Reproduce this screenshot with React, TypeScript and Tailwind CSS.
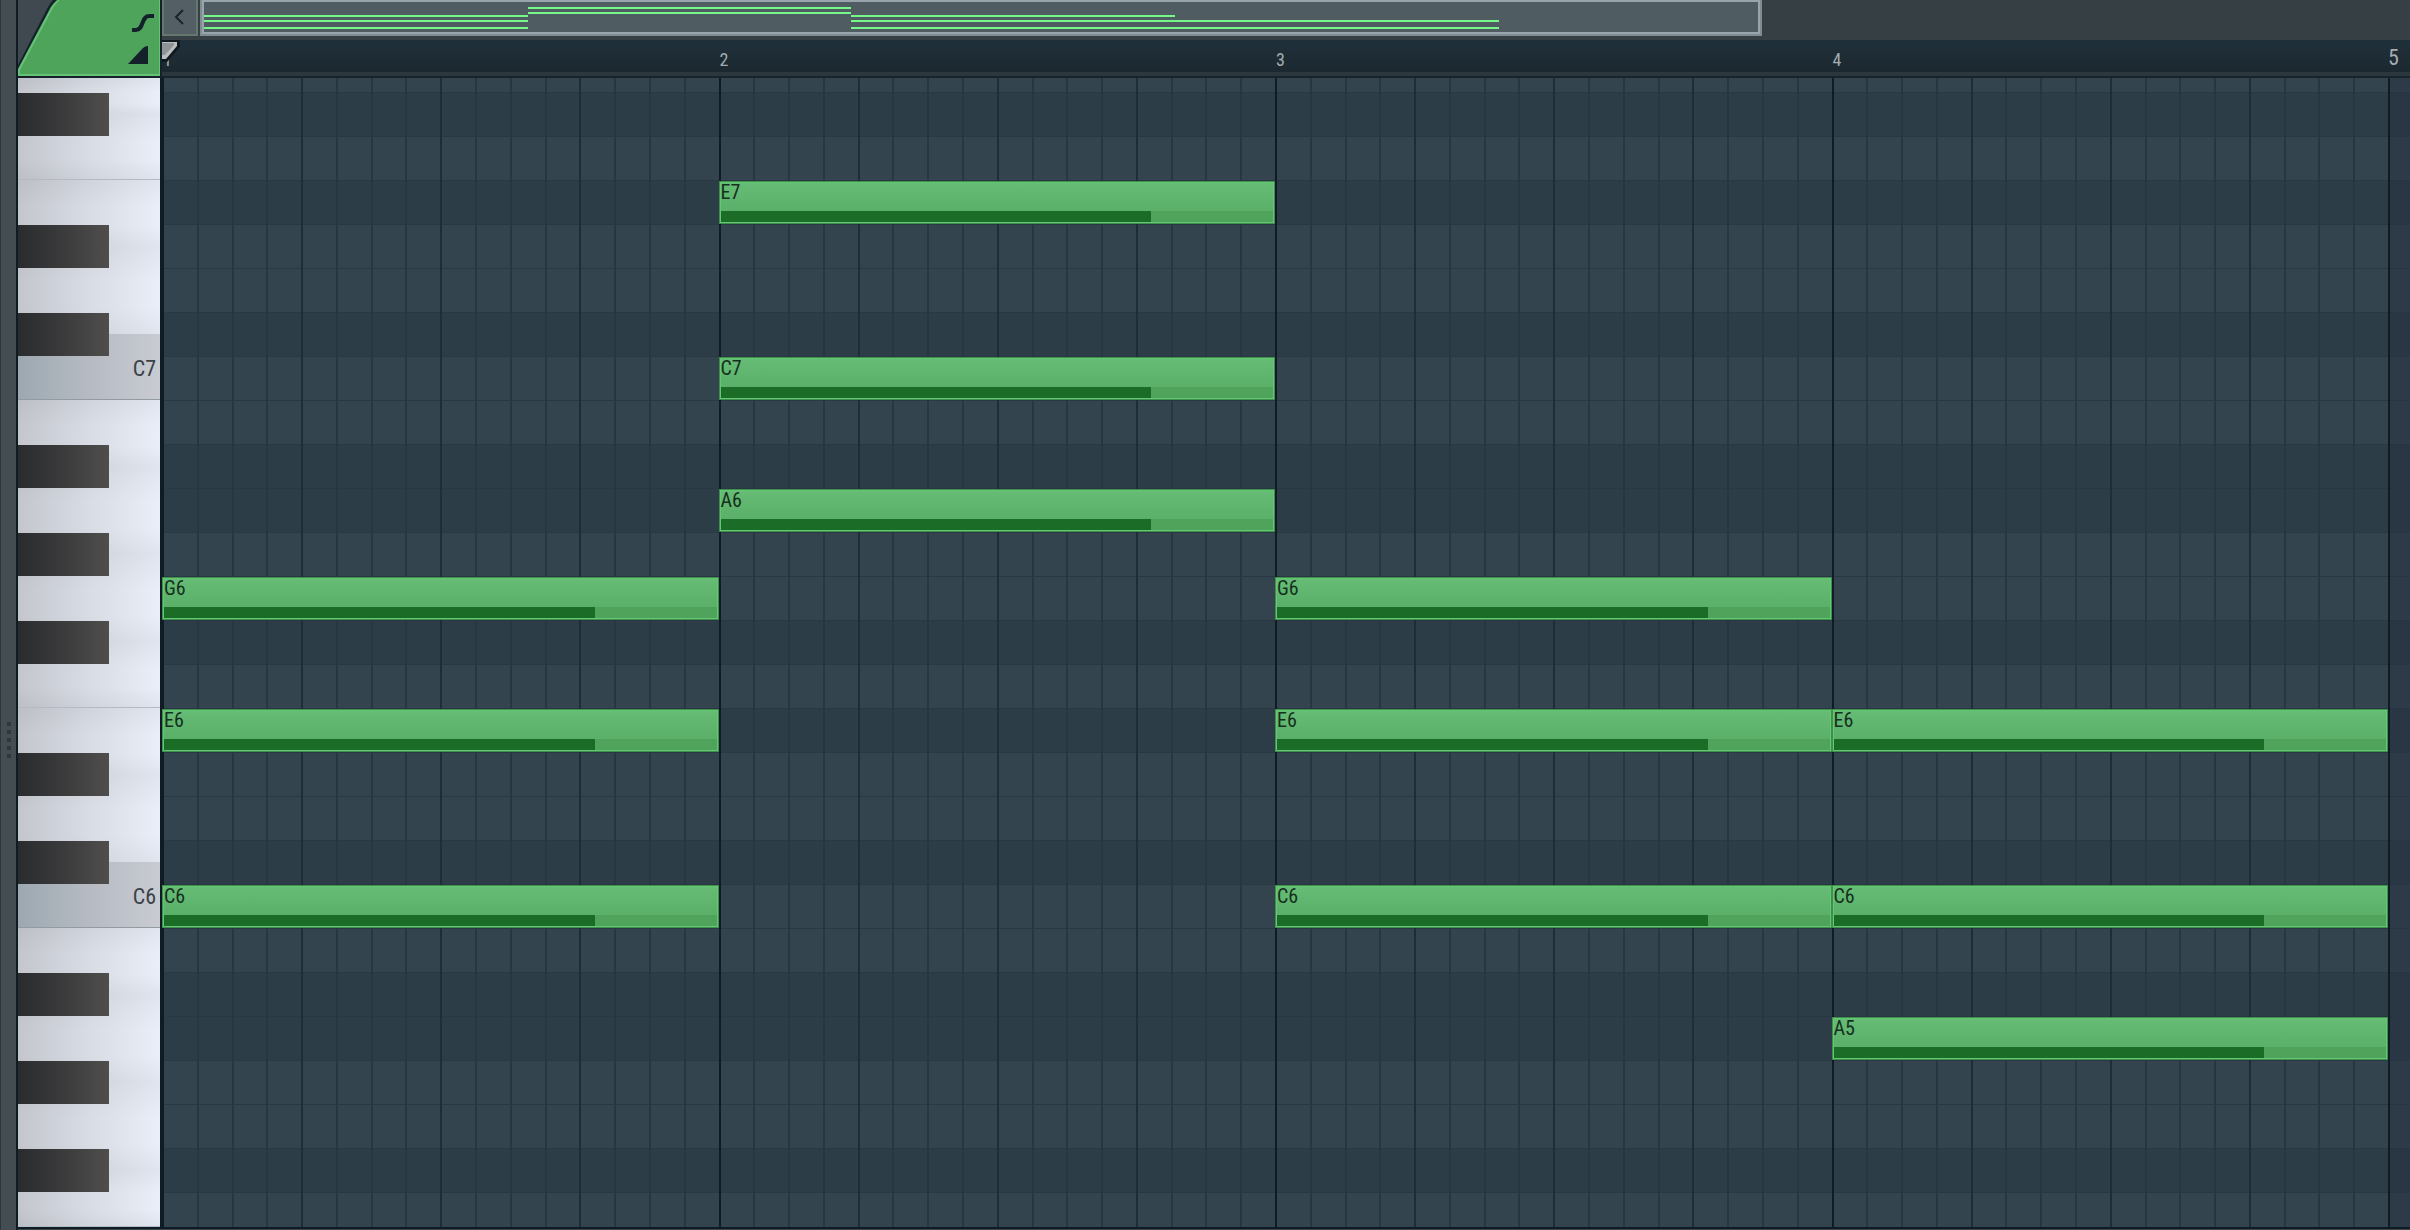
import React from 'react';

const BARS = 4;

// [pitch, dark row] from the top of the view down
const rows: [string, boolean][] = [
  ['G7', false],
  ['F#7', true],
  ['F7', false],
  ['E7', true],
  ['D#7', false],
  ['D7', false],
  ['C#7', true],
  ['C7', false],
  ['B6', false],
  ['A#6', true],
  ['A6', true],
  ['G#6', false],
  ['G6', false],
  ['F#6', true],
  ['F6', false],
  ['E6', true],
  ['D#6', false],
  ['D6', false],
  ['C#6', true],
  ['C6', false],
  ['B5', false],
  ['A#5', true],
  ['A5', true],
  ['G#5', false],
  ['G5', false],
  ['F#5', true],
  ['F5', false],
];

const notes = [
  { pitch: 'G6', bar: 1 },
  { pitch: 'E6', bar: 1 },
  { pitch: 'C6', bar: 1 },
  { pitch: 'E7', bar: 2 },
  { pitch: 'C7', bar: 2 },
  { pitch: 'A6', bar: 2 },
  { pitch: 'G6', bar: 3 },
  { pitch: 'E6', bar: 3 },
  { pitch: 'C6', bar: 3 },
  { pitch: 'E6', bar: 4 },
  { pitch: 'C6', bar: 4 },
  { pitch: 'A5', bar: 4 },
];

const whiteKeys = [
  { name: 'G7', size: 'h-9', black: '' },
  { name: 'F7', size: 'h-[66px]', black: 'F#7' },
  { name: 'E7', size: 'h-[66px]', black: '' },
  { name: 'D7', size: 'h-[88px]', black: 'D#7' },
  { name: 'C7', size: 'h-[66px]', black: 'C#7' },
  { name: 'B6', size: 'h-[66px]', black: '' },
  { name: 'A6', size: 'h-[88px]', black: 'A#6' },
  { name: 'G6', size: 'h-[88px]', black: 'G#6' },
  { name: 'F6', size: 'h-[66px]', black: 'F#6' },
  { name: 'E6', size: 'h-[66px]', black: '' },
  { name: 'D6', size: 'h-[88px]', black: 'D#6' },
  { name: 'C6', size: 'h-[66px]', black: 'C#6' },
  { name: 'B5', size: 'h-[66px]', black: '' },
  { name: 'A5', size: 'h-[88px]', black: 'A#5' },
  { name: 'G5', size: 'h-[88px]', black: 'G#5' },
  { name: 'F5', size: 'h-[57px]', black: 'F#5' },
];

// vertical offsets of the lines in each bar of the overview
const overview = [
  [13, 18, 25],
  [5, 10],
  [13, 18, 25],
  [18, 25],
];

const barStart = ['', 'col-start-1', 'col-start-2', 'col-start-3', 'col-start-4'];

const whiteFace =
  'bg-[linear-gradient(to_bottom,#0000000a,transparent_40%,transparent_70%,#0000000a),linear-gradient(to_right,#c3c6cd,#d8dce4_50%,#e9eef8)]';
const shadedFace = 'bg-linear-to-r from-[#9ca8b0] via-[#b4b9c1] via-45% to-[#c8cbd2]';

const keyStyle = (name: string) => {
  if (name.startsWith('C')) return `border-b border-[#929ba2] ${shadedFace}`;
  if (name.startsWith('F')) return `border-b border-[#b4b9c2] ${whiteFace}`;
  return whiteFace;
};

const ToolCorner = () => (
  <div className="relative h-[78px] shrink-0">
    <svg className="absolute inset-0" width="144" height="78" viewBox="0 0 144 78" aria-hidden="true">
      <rect width="144" height="78" fill="#3f494f" />
      <path d="M0 78V65L30 7Q34 0 38 -3H144V78Z" fill="#15222a" />
      <path d="M0 76V69L33 7Q37 1 43 -3H142V76Z" fill="#66c277" />
      <path d="M2 74V70L35 8Q39 2 45 -3H141V74Z" fill="#4fa45c" />
    </svg>
    <div className="relative flex h-full flex-col items-end justify-end gap-3.5 pr-3 pb-3">
      <button aria-label="Slide" className="mr-[-6px]">
        <svg width="24" height="22" viewBox="0 0 24 22">
          <path d="M2 20H6C14 20 11 6 19 6H24" fill="none" stroke="#14202a" strokeWidth="4" />
        </svg>
      </button>
      <button aria-label="Ramp">
        <svg width="20" height="20" viewBox="0 0 20 20">
          <path d="M0 18L15 2Q17 0 20 0V18Z" fill="#14202a" />
        </svg>
      </button>
    </div>
  </div>
);

const Keyboard = () => (
  <div className="flex flex-col overflow-hidden border-b-2 border-[#101c24]">
    {whiteKeys.map((key) => (
      <div key={key.name} className={`relative ${key.size}`}>
        <button
          aria-label={key.name}
          className={`flex h-full w-full items-end justify-end pr-1 pb-[18px] text-[22px] leading-6 text-[#3a4247] ${keyStyle(key.name)}`}
        >
          {key.name.startsWith('C') && key.name}
        </button>
        {key.black && (
          <button
            aria-label={key.black}
            className="absolute top-[-21px] left-0 h-[43px] w-[91px] bg-linear-to-r from-[#292b2d] via-[#3b3b3c] to-[#504e4d]"
          />
        )}
      </div>
    ))}
  </div>
);

const Overview = () => (
  <div className="flex h-9 gap-[2px]">
    <button
      aria-label="Scroll left"
      className="flex w-9 items-center justify-center border-2 border-t-0 border-[#64776f] bg-[#535f65]"
    >
      <svg width="14" height="18" viewBox="0 0 14 18">
        <path d="M10 2L3 9L10 16" fill="none" stroke="#18242b" strokeWidth="2" />
      </svg>
    </button>
    <div className="flex-1">
      <div className="h-9 w-[70.7%] border-2 border-t-0 border-[#828b8f]">
        <div className="h-[34px] border-2 border-[#98a5ac] bg-[#4f5c62]">
          <div className="grid h-full w-[83.3%] grid-cols-4">
            {overview.map((lines, i) => (
              <div key={i} className="relative">
                {lines.map((top) => (
                  <div key={top} className="absolute inset-x-0 h-[2px] bg-[#76f78a]" style={{ top }} />
                ))}
              </div>
            ))}
          </div>
        </div>
      </div>
    </div>
  </div>
);

const Ruler = () => (
  <div className="relative mt-1 grid h-[38px] grid-cols-[repeat(4,1fr)_22px] border-b-2 border-[#18242b] bg-linear-to-b from-[#20303a] to-[#1b272f] text-lg leading-10 text-[#a3adb2]">
    {Array.from({ length: BARS }).map((_, i) => (
      <span key={i} className="pl-px">
        {i + 1}
      </span>
    ))}
    <span className="text-[22px] leading-9">5</span>
    <div className="absolute inset-x-0 bottom-0 h-1 bg-[#2c363d]" />
    <svg className="absolute top-0 left-0" width="20" height="24" viewBox="0 0 20 24" aria-hidden="true">
      <path d="M0 0H18V7L5 22H0Z" fill="#10191f" />
      <path d="M0 2H15V6L4 19H0Z" fill="#b9bec0" />
      <path d="M0 3H12V5L3 15H0Z" fill="#8f9496" />
    </svg>
  </div>
);

const GridLines = () => (
  <div className="pointer-events-none absolute inset-0 grid grid-cols-[repeat(4,1fr)_22px]">
    {Array.from({ length: BARS }).map((_, bar) => (
      <div key={bar} className="grid grid-cols-16">
        {Array.from({ length: 16 }).map((_, step) => (
          <div
            key={step}
            className={`border-l-2 ${
              step === 0 ? 'border-[#101c24]' : step % 4 === 0 ? 'border-[#1e2d36]' : 'border-[#263740]'
            }`}
          />
        ))}
      </div>
    ))}
    <div className="border-l-2 border-[#101c24] bg-[#26324280]" />
  </div>
);

const NoteGrid = () => (
  <div className="relative border-b-2 border-[#101c24]">
    {rows.map(([pitch, dark], i) => (
      <div
        key={pitch}
        className={`grid grid-cols-[repeat(4,1fr)_22px] ${
          i === 0 ? 'h-[14px]' : i === rows.length - 1 ? 'h-[35px] border-t' : 'h-11 border-t'
        } border-[#293943] ${dark ? 'bg-[#2d3d47]' : 'bg-[#34444e]'}`}
      >
        {notes
          .filter((note) => note.pitch === pitch)
          .map((note) => (
            <button
              key={note.bar}
              className={`relative z-10 row-start-1 flex flex-col justify-between border border-[#418d4d] bg-[#62c973] text-left ${barStart[note.bar]}`}
            >
              <span className="mx-px mt-px w-[calc(100%-2px)] flex-1 bg-linear-to-b from-[#67bc75] to-[#5bb069] text-xl leading-[18px] text-[#15301e]">
                {note.pitch}
              </span>
              <span className="mx-px mb-px block h-[11px] w-[calc(100%-2px)] bg-[#4fa35b]">
                <span className="block h-full w-[78%] bg-[#1a6c27]" />
              </span>
            </button>
          ))}
      </div>
    ))}
    <GridLines />
  </div>
);

const App = () => {
  return (
    <div className="flex min-h-screen items-start bg-[#3b454a] font-['Liberation_Sans_Narrow','Roboto_Condensed','Roboto',sans-serif]">
      {/* Resize handle */}
      <div className="flex w-[18px] shrink-0 flex-col items-center justify-center gap-1 self-stretch border-r-2 border-l border-r-[#101c24] border-l-[#2c383e] bg-[#444e52] pt-[250px]">
        {Array.from({ length: 5 }).map((_, i) => (
          <div key={i} className="size-1 bg-[#2c393f]" />
        ))}
      </div>

      <div className="flex w-36 shrink-0 flex-col border-r-2 border-[#101c24]">
        <ToolCorner />
        <Keyboard />
      </div>

      <main className="min-w-0 flex-1">
        <div className="bg-[#363f43]">
          <Overview />
          <Ruler />
        </div>
        <NoteGrid />
      </main>
    </div>
  );
};

export default App;
